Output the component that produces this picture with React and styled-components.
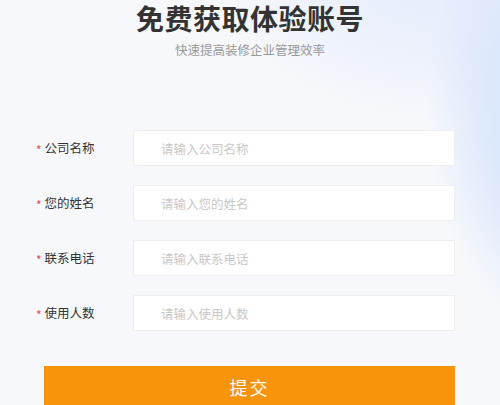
import React from 'react'
import styled, { createGlobalStyle } from 'styled-components'

const GlobalStyle = createGlobalStyle`
  * { box-sizing: border-box; }
  html, body { margin: 0; padding: 0; }
  body {
    font-family: "Noto Sans CJK SC", "Noto Sans", "Liberation Sans", sans-serif;
    background: #f7f8fb;
  }
`

const Page = styled.div`
  position: relative;
  width: 500px;
  height: 405px;
  overflow: hidden;
  background:
    radial-gradient(ellipse 150px 230px at 575px 110px, #d4e2fb 0%, #dbe7fc 55%, rgba(228,236,252,0) 100%),
    radial-gradient(ellipse 240px 150px at 450px -30px, #e4ecfc 0%, rgba(233,239,252,0.75) 60%, rgba(247,248,251,0) 100%),
    #f7f8fb;
`

const Header = styled.div`
  display: flex;
  flex-direction: column;
  align-items: center;
  padding-top: 1px;
`

const Title = styled.h1`
  margin: 0;
  font-size: 28px;
  line-height: 34px;
  font-weight: 700;
  color: #333;
  letter-spacing: 0.5px;
`

const Subtitle = styled.p`
  margin: 5px 0 0;
  font-size: 12.5px;
  line-height: 20px;
  color: #999;
`

const Form = styled.form`
  display: flex;
  flex-direction: column;
  gap: 19px;
  margin-top: 70px;
  padding-left: 36px;
`

const Row = styled.div`
  display: flex;
  align-items: center;
  height: 36px;
`

const Label = styled.label`
  display: flex;
  align-items: center;
  width: 97px;
  font-size: 12.5px;
  color: #333;
  padding-bottom: 2px;
`

const Star = styled.span`
  display: inline-block;
  color: #f44;
  font-size: 12px;
  margin-right: 3px;
  line-height: 1;
  transform: translateY(3px);
`

const Input = styled.input`
  width: 322px;
  height: 36px;
  border: 1px solid #eeeeee;
  background: #fff;
  padding: 0 0 0 27px;
  font-family: inherit;
  font-size: 12.5px;
  color: #333;
  outline: none;
  &::placeholder { color: #c8c8c8; }
`

const Submit = styled.button`
  align-self: flex-start;
  margin: 16px 0 0 8px;
  width: 411px;
  height: 44px;
  border: none;
  background: #f8930c;
  color: #fff;
  font-family: inherit;
  font-size: 18px;
  letter-spacing: 2px;
  padding-bottom: 3px;
  cursor: pointer;
`

const fields = [
  ['公司名称', '请输入公司名称'],
  ['您的姓名', '请输入您的姓名'],
  ['联系电话', '请输入联系电话'],
  ['使用人数', '请输入使用人数'],
]

export default function App() {
  return (
    <Page>
      <GlobalStyle />
      <Header>
        <Title>免费获取体验账号</Title>
        <Subtitle>快速提高装修企业管理效率</Subtitle>
      </Header>
      <Form onSubmit={(e) => e.preventDefault()}>
        {fields.map(([label, ph]) => (
          <Row key={label}>
            <Label><Star>*</Star>{label}</Label>
            <Input placeholder={ph} />
          </Row>
        ))}
        <Submit>提交</Submit>
      </Form>
    </Page>
  )
}
